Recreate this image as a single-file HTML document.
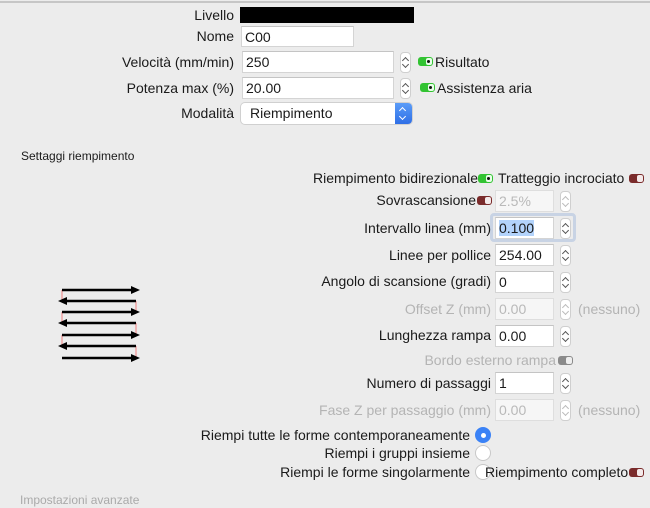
<!DOCTYPE html>
<html><head><meta charset="utf-8"><style>
*{box-sizing:border-box}
body{margin:0;width:650px;height:496px;background:#ececec;font-family:"Liberation Sans",Arial,sans-serif;font-size:14px;color:#1a1a1a;position:relative;overflow:hidden}
.t{position:absolute;white-space:nowrap;line-height:16px}
.r{text-align:right}
.g{color:#b4b4b4}
.in{position:absolute;background:#fff;border:1px solid #d4d4d4;border-top-color:#c4c4c4;padding:2px 0 0 3px;line-height:16px;font-size:14px}
.in.d{color:#b9b9b9;background:#f6f6f6;border-color:#dedede}
.st{position:absolute;width:11px;height:21px;border:1px solid #cfcfcf;border-radius:4px;background:#fff}
.st:before,.st:after{content:"";position:absolute;left:2px;width:4px;height:4px;border-left:1px solid #555;border-top:1px solid #555}
.st:before{top:5px;transform:rotate(45deg)}
.st:after{bottom:5px;transform:rotate(-135deg)}
.st.d:before,.st.d:after{border-color:#bbb}
.tg{position:absolute;width:15px;height:9px;border-radius:3px;background:#32c332}
.tg:after{content:"";position:absolute;right:1px;top:1px;width:6px;height:7px;border-radius:2px;background:#e8ffe8}
.tg.on:before{content:"";position:absolute;left:9px;top:3px;width:3px;height:3px;border-radius:50%;background:#111;z-index:2}
.tg.off{background:#7a2b2b}
.tg.off:after{background:#f4eaea}
.tg.gr{background:#8a8a8a}
.tg.gr:after{background:#eee}
.rd{position:absolute;width:16px;height:16px;border-radius:50%;background:#fff;border:1px solid #c8c8c8}
.rd.on{background:#3b82f6;border-color:#3b82f6}
.rd.on:after{content:"";position:absolute;left:5px;top:5px;width:5px;height:5px;border-radius:50%;background:#fff}
.sel:before,.sel:after{border-color:#fff !important}
</style></head><body>
<div style="position:absolute;left:0;top:1px;width:650px;height:2px;background:#c6c6c6"></div>

<div class="t r" style="right:416px;top:7px">Livello</div>
<div style="position:absolute;left:240px;top:7px;width:174px;height:16px;background:#000"></div>
<div class="t r" style="right:416px;top:28px">Nome</div>
<div class="in" style="left:241px;top:26px;width:113px;height:21px">C00</div>

<div class="t r" style="right:416px;top:54px">Velocità (mm/min)</div>
<div class="in" style="left:242px;top:51px;width:152px;height:22px">250</div>
<div class="st" style="left:400px;top:52px"></div>
<div class="tg on" style="left:418px;top:57px"></div>
<div class="t" style="left:435px;top:54px">Risultato</div>

<div class="t r" style="right:416px;top:80px">Potenza max (%)</div>
<div class="in" style="left:242px;top:77px;width:152px;height:22px">20.00</div>
<div class="st" style="left:400px;top:78px"></div>
<div class="tg on" style="left:420px;top:83px"></div>
<div class="t" style="left:437px;top:80px">Assistenza aria</div>

<div class="t r" style="right:416px;top:105px">Modalità</div>
<div style="position:absolute;left:241px;top:103px;width:171px;height:21px;background:#fff;border-radius:4px;box-shadow:0 0 0 1px #d0d0d0;padding:2px 0 0 9px;line-height:16px">Riempimento</div>
<div style="position:absolute;left:395px;top:103px;width:17px;height:21px;background:linear-gradient(#5a9cf8,#2f6fe6);border-radius:0 4px 4px 0"></div>
<div class="st sel" style="left:398px;top:103px;border:none;background:transparent"></div>

<div class="t" style="left:21px;top:148px;font-size:12px">Settaggi riempimento</div>

<div class="t r" style="right:172px;top:170px">Riempimento bidirezionale</div>
<div class="tg on" style="left:478px;top:174px"></div>
<div class="t" style="left:498px;top:170px">Tratteggio incrociato</div>
<div class="tg off" style="left:629px;top:174px"></div>

<div class="t r" style="right:174px;top:192px">Sovrascansione</div>
<div class="tg off" style="left:477px;top:196px"></div>
<div class="in d" style="left:495px;top:190px;width:59px;height:22px">2.5%</div>
<div class="st d" style="left:560px;top:191px"></div>

<div style="position:absolute;left:490px;top:213px;width:86px;height:29px;border:3px solid #c8d3e4;border-radius:4px"></div>
<div class="t r" style="right:159px;top:220px">Intervallo linea (mm)</div>
<div class="in" style="left:495px;top:217px;width:59px;height:22px"><span style="background:#b3d3fb">0.100</span></div>
<div class="st" style="left:560px;top:218px"></div>

<div class="t r" style="right:159px;top:247px">Linee per pollice</div>
<div class="in" style="left:495px;top:244px;width:59px;height:22px">254.00</div>
<div class="st" style="left:560px;top:245px"></div>

<div class="t r" style="right:159px;top:273px">Angolo di scansione (gradi)</div>
<div class="in" style="left:495px;top:271px;width:59px;height:22px">0</div>
<div class="st" style="left:560px;top:272px"></div>

<div class="t r g" style="right:159px;top:301px">Offset Z (mm)</div>
<div class="in d" style="left:495px;top:298px;width:59px;height:22px">0.00</div>
<div class="st d" style="left:560px;top:299px"></div>
<div class="t g" style="left:578px;top:301px">(nessuno)</div>

<div class="t r" style="right:159px;top:327px">Lunghezza rampa</div>
<div class="in" style="left:495px;top:325px;width:59px;height:22px">0.00</div>
<div class="st" style="left:560px;top:326px"></div>

<div class="t r g" style="right:94px;top:352px">Bordo esterno rampa</div>
<div class="tg gr" style="left:558px;top:356px"></div>

<div class="t r" style="right:159px;top:375px">Numero di passaggi</div>
<div class="in" style="left:495px;top:372px;width:59px;height:22px">1</div>
<div class="st" style="left:560px;top:373px"></div>

<div class="t r g" style="right:159px;top:402px">Fase Z per passaggio (mm)</div>
<div class="in d" style="left:495px;top:399px;width:59px;height:22px">0.00</div>
<div class="st d" style="left:560px;top:400px"></div>
<div class="t g" style="left:578px;top:402px">(nessuno)</div>

<div class="t r" style="right:180px;top:427px">Riempi tutte le forme contemporaneamente</div>
<div class="rd on" style="left:475px;top:427px"></div>
<div class="t r" style="right:180px;top:445px">Riempi i gruppi insieme</div>
<div class="rd" style="left:475px;top:445px"></div>
<div class="t r" style="right:180px;top:464px">Riempi le forme singolarmente</div>
<div class="rd" style="left:475px;top:464px"></div>
<div class="t" style="left:485px;top:464px">Riempimento completo</div>
<div class="tg off" style="left:629px;top:468px"></div>

<div class="t g" style="left:20px;top:492px;font-size:12px;color:#aaa">Impostazioni avanzate</div>

<svg style="position:absolute;left:0;top:0" width="650" height="496">
<g stroke="#f08080" stroke-width="1">
<line x1="62" y1="290" x2="62" y2="301"/><line x1="136" y1="301" x2="136" y2="312"/>
<line x1="62" y1="312" x2="62" y2="323"/><line x1="136" y1="323" x2="136" y2="335"/>
<line x1="62" y1="335" x2="62" y2="346"/><line x1="136" y1="346" x2="136" y2="358"/>
</g>
<g stroke="#000" stroke-width="2.5">
<line x1="62" y1="290" x2="132" y2="290"/><line x1="64" y1="301" x2="136" y2="301"/>
<line x1="62" y1="312" x2="132" y2="312"/><line x1="64" y1="323" x2="136" y2="323"/>
<line x1="62" y1="335" x2="132" y2="335"/><line x1="64" y1="346" x2="136" y2="346"/>
<line x1="62" y1="358" x2="132" y2="358"/>
</g>
<g fill="#000">
<path d="M140 290 L131 286 L131 294Z"/><path d="M58 301 L67 297 L67 305Z"/>
<path d="M140 312 L131 308 L131 316Z"/><path d="M58 323 L67 319 L67 327Z"/>
<path d="M140 335 L131 331 L131 339Z"/><path d="M58 346 L67 342 L67 350Z"/>
<path d="M140 358 L131 354 L131 362Z"/>
</g>
</svg>
</body></html>
